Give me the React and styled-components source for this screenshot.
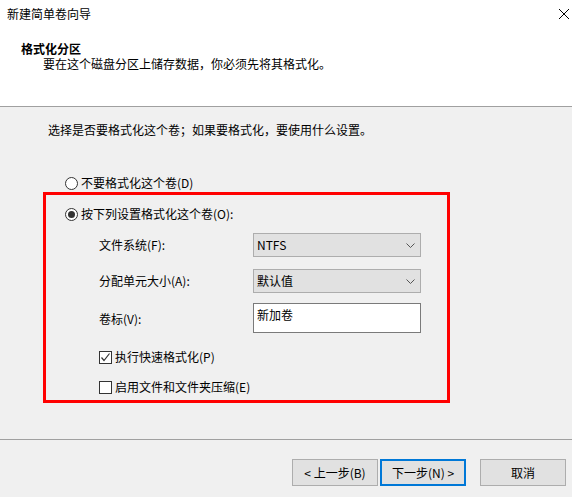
import React from "react";
import styled, { createGlobalStyle } from "styled-components";

const Global = createGlobalStyle`
  html, body { margin: 0; padding: 0; }
  body {
    background: #f0f0f0;
    font-family: "Noto Sans CJK SC", "Noto Sans", sans-serif;
    font-size: 12px;
    color: #000;
  }
  * { box-sizing: border-box; }
`;

const Window = styled.div`
  width: 572px;
  height: 497px;
  display: flex;
  flex-direction: column;
  background: #f0f0f0;
  overflow: hidden;
`;

const Header = styled.div`
  height: 107px;
  background: #fff;
  border-bottom: 1px solid #a0a0a0;
  display: flex;
  flex-direction: column;
`;

const TitleBar = styled.div`
  height: 28px;
  display: flex;
  align-items: center;
  justify-content: space-between;
  padding: 0 3px 0 7px;
  line-height: 16px;
`;

const CloseBtn = styled.div`
  width: 10px;
  height: 10px;
  margin-top: -1px;
  display: flex;
`;

const Heading = styled.div`
  margin-top: 13px;
  padding-left: 21px;
  font-weight: bold;
  line-height: 15px;
`;

const SubHeading = styled.div`
  padding-left: 43px;
  line-height: 15px;
`;

const Body = styled.div`
  height: 332px;
  display: flex;
  flex-direction: column;
`;

const Intro = styled.div`
  margin: 15px 0 0 48px;
  line-height: 16px;
`;

const OptionRow = styled.label`
  display: flex;
  align-items: center;
  gap: 3px;
  height: 16px;
  line-height: 16px;
  margin-left: ${(p) => p.$indent || 0}px;
  margin-top: ${(p) => p.$top || 0}px;
`;

const Radio = styled.span`
  width: 13px;
  height: 13px;
  border: 1px solid #333;
  border-radius: 50%;
  background: #fff;
  display: flex;
  align-items: center;
  justify-content: center;
  flex: none;
  &::after {
    content: "";
    width: 7px;
    height: 7px;
    border-radius: 50%;
    background: #333;
    display: ${(p) => (p.$checked ? "block" : "none")};
  }
`;

const Check = styled.span`
  width: 13px;
  height: 13px;
  border: 1px solid #333;
  background: #fff;
  display: flex;
  align-items: center;
  justify-content: center;
  flex: none;
`;

const Highlight = styled.div`
  margin: 1px 0 0 43px;
  width: 407px;
  height: 211px;
  border: 3px solid #ff0000;
  display: flex;
  flex-direction: column;
`;

const FormGrid = styled.div`
  margin: 11px 0 0 53px;
  display: grid;
  grid-template-columns: 154px 168px;
  row-gap: 12px;
  align-items: center;
`;

const Label = styled.div`
  line-height: 16px;
`;

const Select = styled.div`
  height: 24px;
  border: 1px solid #adadad;
  background: #e1e1e1;
  display: flex;
  align-items: center;
  justify-content: space-between;
  padding: 0 5px 0 3px;
  line-height: 16px;
`;

const TextBox = styled.div`
  height: 30px;
  border: 1px solid #7a7a7a;
  background: #fff;
  padding: 3px 3px 0 3px;
  line-height: 16px;
  margin-top: -2px;
`;

const Footer = styled.div`
  flex: 1;
  border-top: 1px solid #a0a0a0;
  display: flex;
  justify-content: flex-end;
  align-items: flex-start;
  padding: 19px 6px 0 0;
`;

const Button = styled.div`
  width: 86px;
  height: 27px;
  background: #e1e1e1;
  border: ${(p) => (p.$default ? "2px solid #0078d7" : "1px solid #adadad")};
  display: flex;
  align-items: center;
  justify-content: center;
  line-height: 16px;
  margin-left: ${(p) => p.$gap || 0}px;
`;

const Chevron = () => (
  <svg width="9" height="5" viewBox="0 0 9 5">
    <path d="M0.5 0.5 L4.5 4.5 L8.5 0.5" fill="none" stroke="#555" strokeWidth="1" />
  </svg>
);

export default function App() {
  return (
    <>
      <Global />
      <Window>
        <Header>
          <TitleBar>
            <span>新建简单卷向导</span>
            <CloseBtn>
              <svg width="10" height="10" viewBox="0 0 10 10">
                <path d="M0 0 L10 10 M10 0 L0 10" stroke="#000" strokeWidth="1" />
              </svg>
            </CloseBtn>
          </TitleBar>
          <Heading>格式化分区</Heading>
          <SubHeading>要在这个磁盘分区上储存数据，你必须先将其格式化。</SubHeading>
        </Header>
        <Body>
          <Intro>选择是否要格式化这个卷；如果要格式化，要使用什么设置。</Intro>
          <OptionRow $indent={65} $top={37}>
            <Radio />
            <span>不要格式化这个卷(D)</span>
          </OptionRow>
          <Highlight>
            <OptionRow $indent={19} $top={11}>
              <Radio $checked />
              <span>按下列设置格式化这个卷(O):</span>
            </OptionRow>
            <FormGrid>
              <Label>文件系统(F):</Label>
              <Select>
                <span>NTFS</span>
                <Chevron />
              </Select>
              <Label>分配单元大小(A):</Label>
              <Select>
                <span>默认值</span>
                <Chevron />
              </Select>
              <Label>卷标(V):</Label>
              <TextBox>新加卷</TextBox>
            </FormGrid>
            <OptionRow $indent={53} $top={16}>
              <Check>
                <svg width="11" height="11" viewBox="0 0 11 11">
                  <path d="M1.5 5.5 L4 8.5 L9.5 1.5" fill="none" stroke="#333" strokeWidth="1.2" />
                </svg>
              </Check>
              <span>执行快速格式化(P)</span>
            </OptionRow>
            <OptionRow $indent={53} $top={14}>
              <Check />
              <span>启用文件和文件夹压缩(E)</span>
            </OptionRow>
          </Highlight>
        </Body>
        <Footer>
          <Button>&lt; 上一步(B)</Button>
          <Button $default $gap={2}>下一步(N) &gt;</Button>
          <Button $gap={14}>取消</Button>
        </Footer>
      </Window>
    </>
  );
}
